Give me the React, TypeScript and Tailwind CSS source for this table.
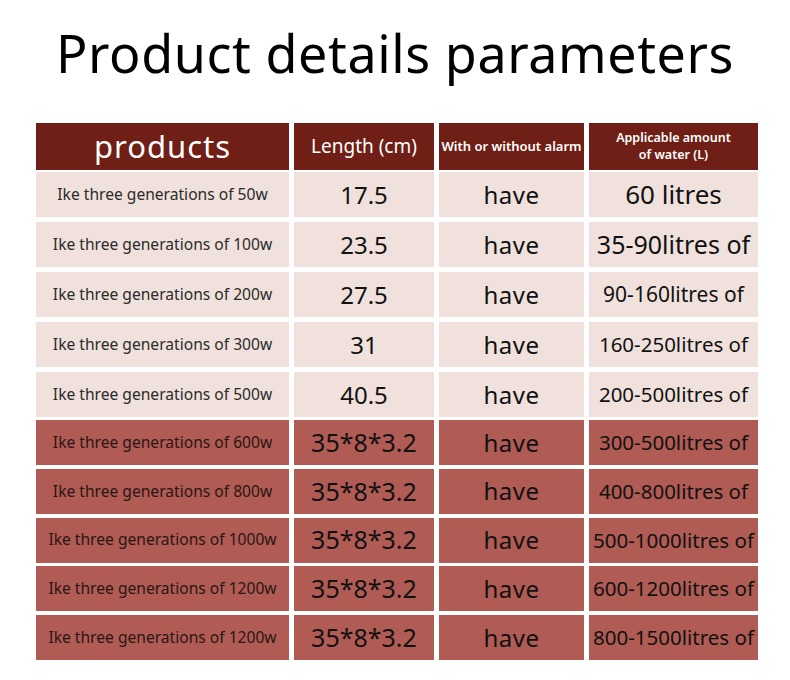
const rows = [
  { name: "Ike three generations of 50w", len: "17.5", water: "60 litres", ws: "text-[26px]", dark: false },
  { name: "Ike three generations of 100w", len: "23.5", water: "35-90litres of", ws: "text-[25px]", dark: false },
  { name: "Ike three generations of 200w", len: "27.5", water: "90-160litres of", ws: "text-[21px]", dark: false },
  { name: "Ike three generations of 300w", len: "31", water: "160-250litres of", ws: "text-[20.5px]", dark: false },
  { name: "Ike three generations of 500w", len: "40.5", water: "200-500litres of", ws: "text-[20.5px]", dark: false },
  { name: "Ike three generations of 600w", len: "35*8*3.2", water: "300-500litres of", ws: "text-[20.5px]", dark: true },
  { name: "Ike three generations of 800w", len: "35*8*3.2", water: "400-800litres of", ws: "text-[20.5px]", dark: true },
  { name: "Ike three generations of 1000w", len: "35*8*3.2", water: "500-1000litres of", ws: "text-[20.5px]", dark: true },
  { name: "Ike three generations of 1200w", len: "35*8*3.2", water: "600-1200litres of", ws: "text-[20.5px]", dark: true },
  { name: "Ike three generations of 1200w", len: "35*8*3.2", water: "800-1500litres of", ws: "text-[20.5px]", dark: true },
];

const font = { fontFamily: '"Noto Sans", "Open Sans", sans-serif' };

function Row({ r }: { r: (typeof rows)[number] }) {
  const bg = r.dark ? "bg-[#b05b54]" : "bg-[#f0e1dc]";
  const cell = `${bg} flex items-center justify-center whitespace-nowrap`;
  return (
    <div className="grid grid-cols-[253px_140px_145px_169px] gap-x-[5px] h-[45px]">
      <div className={`${cell} text-[15.6px] ${r.dark ? "text-[#2a1614]" : "text-[#2b2b2b]"}`}>{r.name}</div>
      <div className={`${cell} ${r.len.length > 4 ? "text-[25px]" : "text-[24px]"} text-[#111]`}>{r.len}</div>
      <div className={`${cell} text-[24px] text-[#111] tracking-[0.5px]`}>have</div>
      <div className={`${cell} ${r.ws} text-[#111]`}>{r.water}</div>
    </div>
  );
}

export default function App() {
  const light = rows.filter((r) => !r.dark);
  const dark = rows.filter((r) => r.dark);

  return (
    <div className="w-[790px] h-[680px] bg-white overflow-hidden" style={font}>
      <h1 className="pt-[21px] h-[123px] text-center text-[52px] leading-[64px] text-black tracking-[0.6px]">
        Product details parameters
      </h1>

      <div className="pl-[36px] flex flex-col">
        <div className="grid grid-cols-[253px_140px_145px_169px] gap-x-[5px] h-[44px] text-white">
          <div className="bg-[#6f1f15] flex items-center justify-center text-[31px] tracking-[1px]">products</div>
          <div className="bg-[#6f1f15] flex items-center justify-center text-[19px]">Length (cm)</div>
          <div className="bg-[#6f1f15] flex items-center justify-center text-[13px] font-semibold whitespace-nowrap">
            With or without alarm
          </div>
          <div className="bg-[#6f1f15] flex flex-col items-center justify-center text-center text-[12.5px] font-semibold leading-[17px]">
            <span>Applicable amount</span>
            <span>of water (L)</span>
          </div>
        </div>

        <div className="mt-[5px] flex flex-col gap-[5px]">
          {light.map((r, i) => (
            <Row key={i} r={r} />
          ))}
        </div>
        <div className="mt-[3px] flex flex-col gap-[3.75px]">
          {dark.map((r, i) => (
            <Row key={i} r={r} />
          ))}
        </div>
      </div>
    </div>
  );
}
